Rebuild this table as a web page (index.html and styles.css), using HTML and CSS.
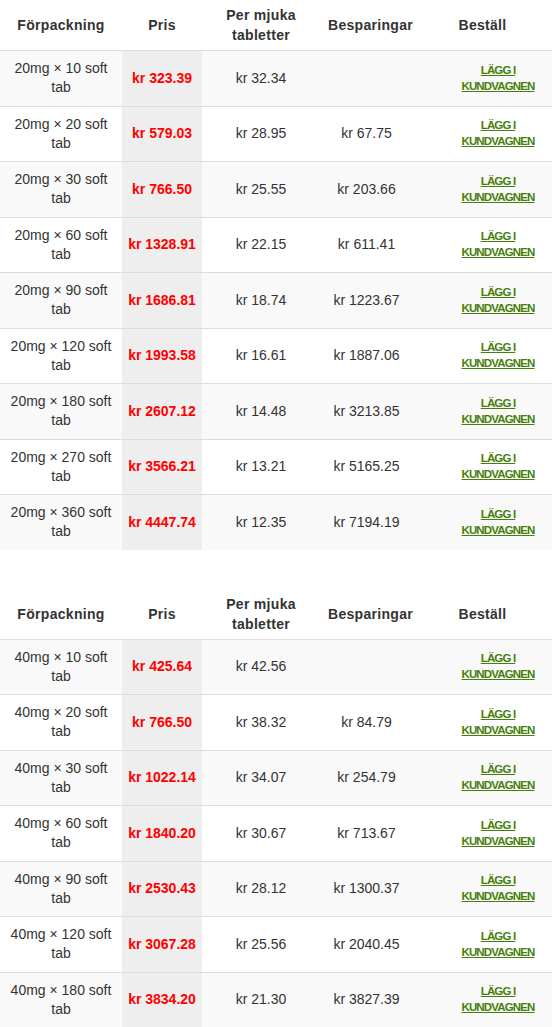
FILE: index.html
```html
<!DOCTYPE html>
<html lang="sv">
<head>
<meta charset="utf-8">
<title>Priser</title>
<link rel="stylesheet" href="styles.css">
</head>
<body>
<div class="page">
<table class="price-table">
  <colgroup><col class="c-pack"><col class="c-price"><col class="c-per"><col class="c-save"><col class="c-order"></colgroup>
  <thead>
    <tr><th>Förpackning</th><th>Pris</th><th>Per mjuka tabletter</th><th>Besparingar</th><th>Beställ</th></tr>
  </thead>
  <tbody>
    <tr><td>20mg × 10 soft tab</td><td class="price">kr 323.39</td><td>kr 32.34</td><td></td><td class="order"><a href="#">Lägg i kundvagnen</a></td></tr>
    <tr><td>20mg × 20 soft tab</td><td class="price">kr 579.03</td><td>kr 28.95</td><td>kr 67.75</td><td class="order"><a href="#">Lägg i kundvagnen</a></td></tr>
    <tr><td>20mg × 30 soft tab</td><td class="price">kr 766.50</td><td>kr 25.55</td><td>kr 203.66</td><td class="order"><a href="#">Lägg i kundvagnen</a></td></tr>
    <tr><td>20mg × 60 soft tab</td><td class="price">kr 1328.91</td><td>kr 22.15</td><td>kr 611.41</td><td class="order"><a href="#">Lägg i kundvagnen</a></td></tr>
    <tr><td>20mg × 90 soft tab</td><td class="price">kr 1686.81</td><td>kr 18.74</td><td>kr 1223.67</td><td class="order"><a href="#">Lägg i kundvagnen</a></td></tr>
    <tr><td>20mg × 120 soft tab</td><td class="price">kr 1993.58</td><td>kr 16.61</td><td>kr 1887.06</td><td class="order"><a href="#">Lägg i kundvagnen</a></td></tr>
    <tr><td>20mg × 180 soft tab</td><td class="price">kr 2607.12</td><td>kr 14.48</td><td>kr 3213.85</td><td class="order"><a href="#">Lägg i kundvagnen</a></td></tr>
    <tr><td>20mg × 270 soft tab</td><td class="price">kr 3566.21</td><td>kr 13.21</td><td>kr 5165.25</td><td class="order"><a href="#">Lägg i kundvagnen</a></td></tr>
    <tr><td>20mg × 360 soft tab</td><td class="price">kr 4447.74</td><td>kr 12.35</td><td>kr 7194.19</td><td class="order"><a href="#">Lägg i kundvagnen</a></td></tr>
  </tbody>
</table>

<table class="price-table">
  <colgroup><col class="c-pack"><col class="c-price"><col class="c-per"><col class="c-save"><col class="c-order"></colgroup>
  <thead>
    <tr><th>Förpackning</th><th>Pris</th><th>Per mjuka tabletter</th><th>Besparingar</th><th>Beställ</th></tr>
  </thead>
  <tbody>
    <tr><td>40mg × 10 soft tab</td><td class="price">kr 425.64</td><td>kr 42.56</td><td></td><td class="order"><a href="#">Lägg i kundvagnen</a></td></tr>
    <tr><td>40mg × 20 soft tab</td><td class="price">kr 766.50</td><td>kr 38.32</td><td>kr 84.79</td><td class="order"><a href="#">Lägg i kundvagnen</a></td></tr>
    <tr><td>40mg × 30 soft tab</td><td class="price">kr 1022.14</td><td>kr 34.07</td><td>kr 254.79</td><td class="order"><a href="#">Lägg i kundvagnen</a></td></tr>
    <tr><td>40mg × 60 soft tab</td><td class="price">kr 1840.20</td><td>kr 30.67</td><td>kr 713.67</td><td class="order"><a href="#">Lägg i kundvagnen</a></td></tr>
    <tr><td>40mg × 90 soft tab</td><td class="price">kr 2530.43</td><td>kr 28.12</td><td>kr 1300.37</td><td class="order"><a href="#">Lägg i kundvagnen</a></td></tr>
    <tr><td>40mg × 120 soft tab</td><td class="price">kr 3067.28</td><td>kr 25.56</td><td>kr 2040.45</td><td class="order"><a href="#">Lägg i kundvagnen</a></td></tr>
    <tr><td>40mg × 180 soft tab</td><td class="price">kr 3834.20</td><td>kr 21.30</td><td>kr 3827.39</td><td class="order"><a href="#">Lägg i kundvagnen</a></td></tr>
  </tbody>
</table>
</div>
</body>
</html>
```

FILE: styles.css
```css
html, body {
  margin: 0;
  padding: 0;
  background: #fff;
}

body {
  font-family: "Liberation Sans", Arial, sans-serif;
  font-size: 14px;
  color: #333;
}

.page {
  width: 552px;
}

.price-table {
  width: 552px;
  table-layout: fixed;
  border-collapse: collapse;
  border-spacing: 0;
}

.price-table + .price-table {
  margin-top: 39px;
}

.c-pack { width: 122px; }
.c-price { width: 80px; }
.c-per { width: 118px; }
.c-save { width: 93px; }
.c-order { width: 139px; }

.price-table th {
  font-weight: bold;
  font-size: 14px;
  letter-spacing: 0.3px;
  line-height: 20px;
  padding: 5px 8px;
  text-align: center;
  vertical-align: middle;
  color: #333;
  border-bottom: 1px solid #ddd;
}

.price-table td {
  text-align: center;
  vertical-align: middle;
  line-height: 19.25px;
  padding: 8px;
  border-top: 1px solid #ddd;
}

.price-table tbody tr:first-child td {
  border-top: 0;
}

.price-table tbody tr:nth-child(odd) td {
  background: #f9f9f9;
}

.price-table tbody tr td.price {
  background: #eee;
  color: #f00;
  font-weight: bold;
  white-space: nowrap;
  padding-left: 2px;
  padding-right: 2px;
}

.price-table td.order {
  padding-left: 39px;
}

.order a {
  display: inline-block;
  font-size: 11.5px;
  font-weight: bold;
  letter-spacing: -0.85px;
  line-height: 16px;
  text-transform: uppercase;
  color: #467f0a;
  text-decoration: underline;
}
```
